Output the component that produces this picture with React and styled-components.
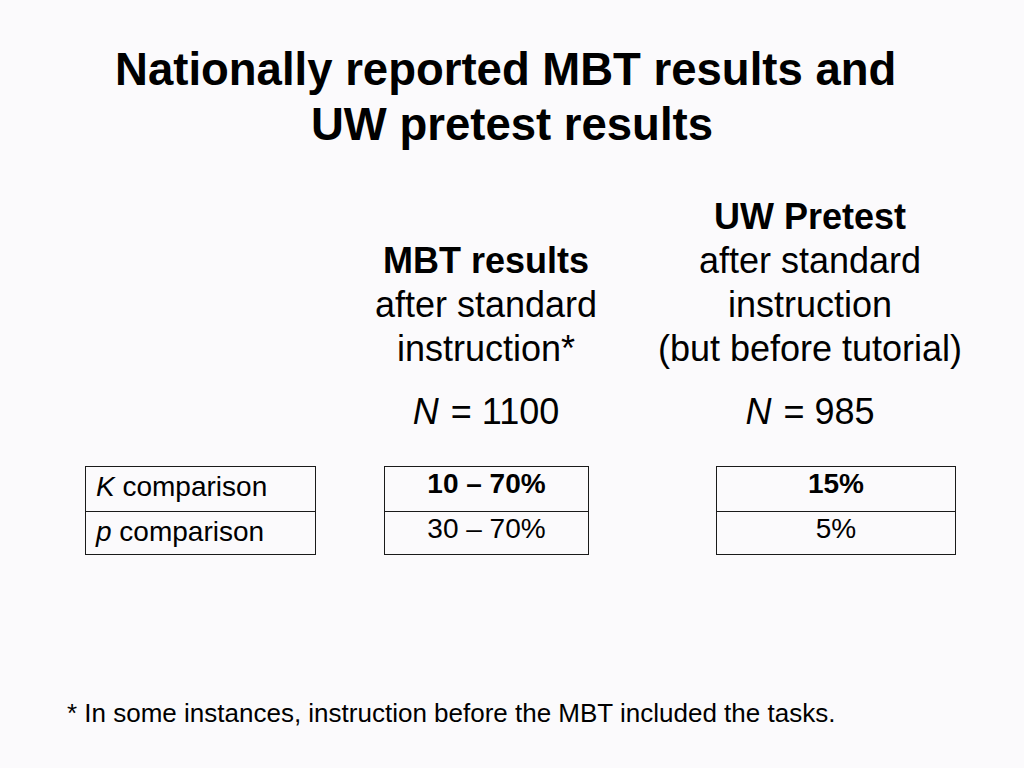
import React from "react";
import styled, { createGlobalStyle } from "styled-components";

const GlobalStyle = createGlobalStyle`
  html, body {
    margin: 0;
    padding: 0;
    background: #fbfafc;
  }
`;

const Slide = styled.div`
  width: 1024px;
  height: 768px;
  display: flex;
  flex-direction: column;
  background: #fbfafc;
  color: #000;
  font-family: "Liberation Sans", Arial, sans-serif;
  box-sizing: border-box;
  overflow: hidden;
`;

const Title = styled.h1`
  margin: 0;
  padding-top: 42px;
  font-size: 45.5px;
  line-height: 55px;
  font-weight: 700;
  text-align: center;
`;

const HeadRow = styled.div`
  display: flex;
  align-items: flex-end;
  margin-top: 43px;
  padding-left: 356px;
  gap: 29px;
`;

const HeadCol = styled.div`
  width: ${p => p.width}px;
  text-align: center;
  font-size: 36px;
  line-height: 44px;
`;

const HeadLine = styled.div`
  font-weight: ${p => (p.bold ? 700 : 400)};
  white-space: nowrap;
`;

const Count = styled.div`
  margin-top: 19px;
  white-space: nowrap;

  i {
    margin-right: 2px;
  }
`;

const TableRow = styled.div`
  display: flex;
  margin-top: 32px;
  padding-left: 85px;
`;

const Table = styled.div`
  width: ${p => p.width}px;
  margin-left: ${p => p.offset || 0}px;
  border: 1px solid #1a1a1a;
  box-sizing: border-box;
  display: flex;
  flex-direction: column;
`;

const Cell = styled.div`
  height: 44px;
  box-sizing: border-box;
  font-size: 28px;
  line-height: ${p => (p.label ? 40 : 34)}px;
  white-space: nowrap;
  text-align: ${p => (p.label ? "left" : "center")};
  padding: ${p => (p.label ? "0 0 0 10px" : "0")};
  font-weight: ${p => (p.bold ? 700 : 400)};

  & + & {
    border-top: 1px solid #1a1a1a;
    height: 43px;
  }
`;

const Footnote = styled.p`
  margin: auto 0 0 0;
  padding: 0 0 40px 67px;
  font-size: 26px;
  line-height: 30px;
`;

export default function App() {
  return (
    <>
      <GlobalStyle />
      <Slide>
        <Title>
          Nationally reported MBT results and{"\u00a0"}
          <br />
          UW pretest results
        </Title>

        <HeadRow>
          <HeadCol width={260}>
            <HeadLine bold>MBT results</HeadLine>
            <HeadLine>after standard</HeadLine>
            <HeadLine>instruction*</HeadLine>
            <Count>
              <i>N</i> = 1100
            </Count>
          </HeadCol>
          <HeadCol width={330}>
            <HeadLine bold>UW Pretest</HeadLine>
            <HeadLine>after standard</HeadLine>
            <HeadLine>instruction</HeadLine>
            <HeadLine>(but before tutorial)</HeadLine>
            <Count>
              <i>N</i> = 985
            </Count>
          </HeadCol>
        </HeadRow>

        <TableRow>
          <Table width={231}>
            <Cell label>
              <i>K</i> comparison
            </Cell>
            <Cell label>
              <i>p</i> comparison
            </Cell>
          </Table>
          <Table width={205} offset={68}>
            <Cell bold>10 – 70%</Cell>
            <Cell>30 – 70%</Cell>
          </Table>
          <Table width={240} offset={127}>
            <Cell bold>15%</Cell>
            <Cell>5%</Cell>
          </Table>
        </TableRow>

        <Footnote>* In some instances, instruction before the MBT included the tasks.</Footnote>
      </Slide>
    </>
  );
}
